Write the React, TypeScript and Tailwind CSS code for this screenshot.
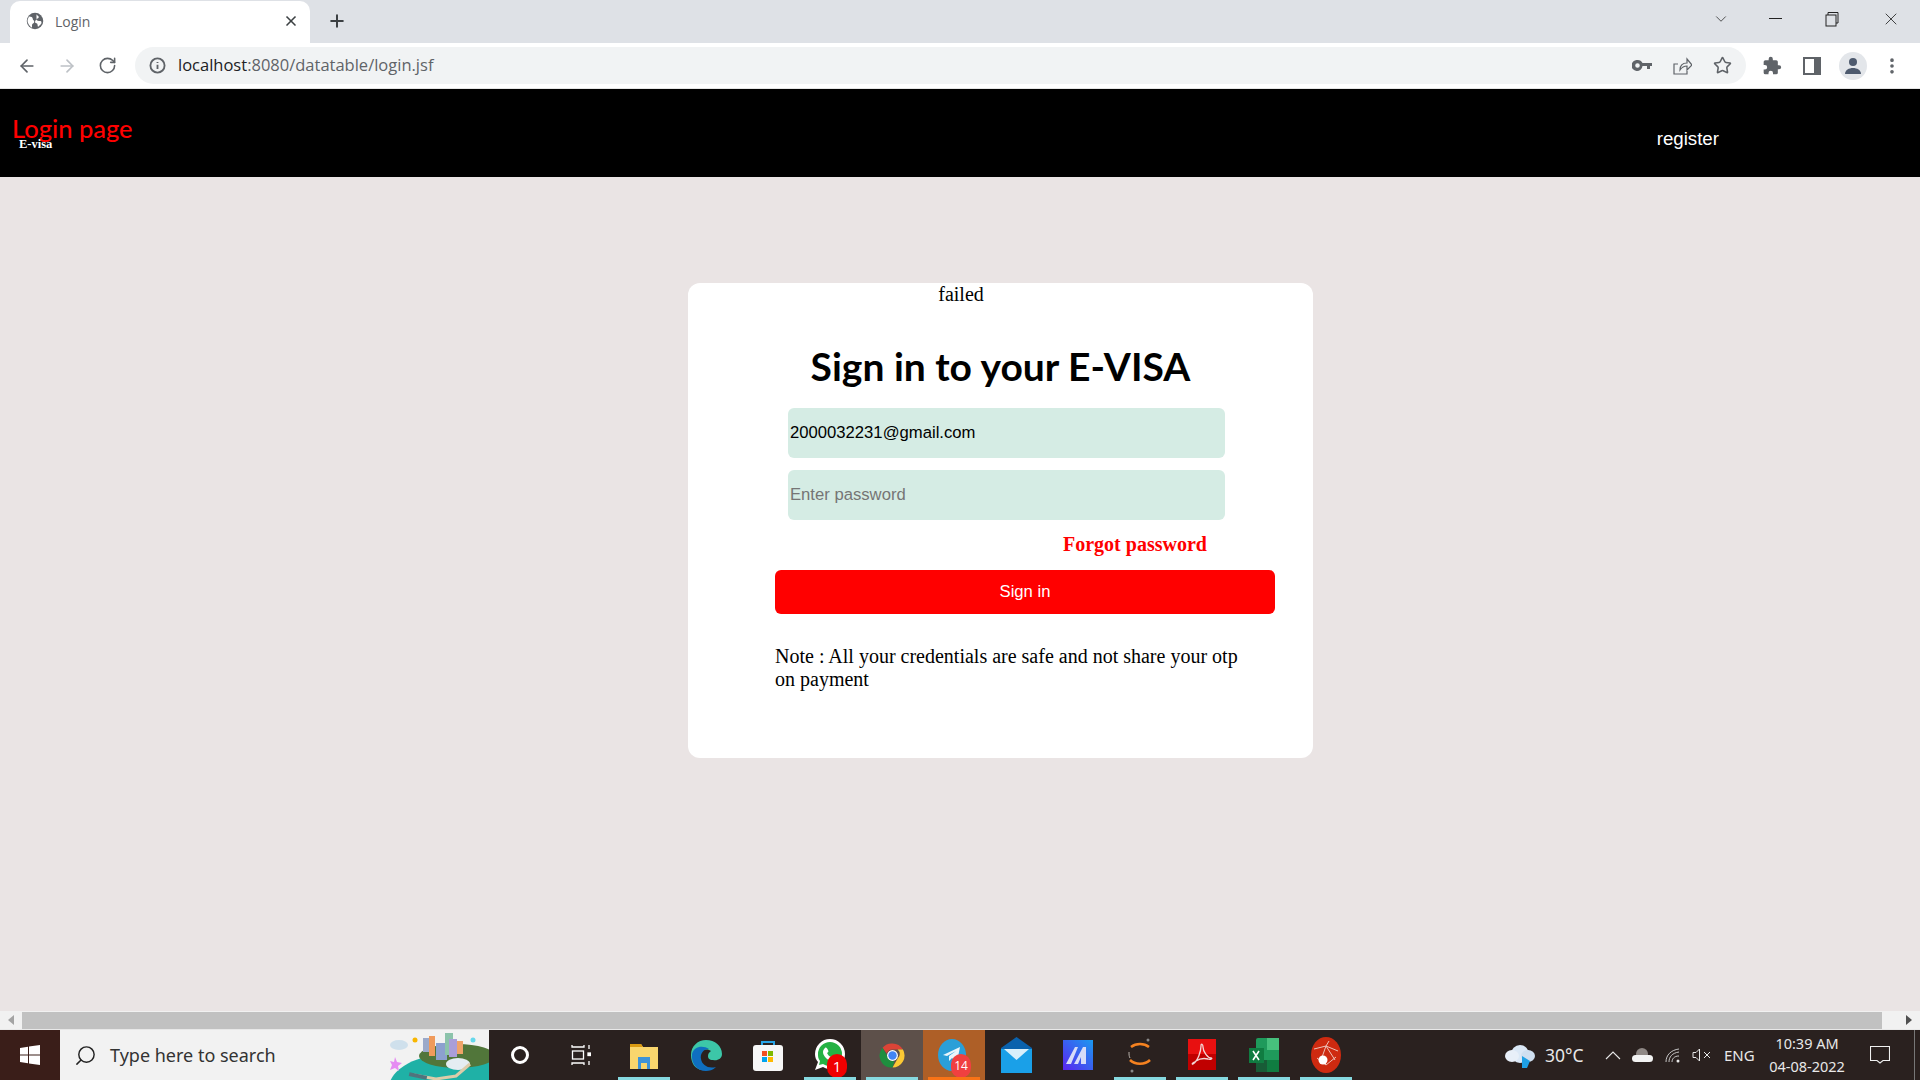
import React from "react";
import { ArrowLeft, ArrowRight, RotateCw, X, Plus, ChevronDown, Star, MoreVertical, Search } from "lucide-react";

const Globe = () => (
  <svg width="18" height="18" viewBox="0 0 24 24"><circle cx="12" cy="12" r="11" fill="#5f6368" /><path d="M4 6c3 0 5 1 5 3s2 2 2 4-2 2-3 4v4C5 19 2 15 2 12c0-2 1-4 2-6zM14 3c1 2 3 2 3 4s-3 1-3 3 3 2 5 2 2 3 1 4-3 3-4 4c-1-3 0-4-2-5-3 0-2-4 0-5" fill="#fff" /></svg>
);

function Chrome() {
  return (
    <div className="shrink-0 font-['Open_Sans',sans-serif]">
      <div className="h-[43px] bg-[#dee1e6] flex items-end pl-[10px]">
        <div className="w-[300px] h-[42px] bg-white rounded-t-[10px] flex items-center pl-[16px] pr-[11px] pb-[2px]">
          <Globe />
          <span className="ml-[11px] text-[14px] text-[#5f6368]">Login</span>
          <X className="ml-auto text-[#3c4043]" size={16} strokeWidth={2.5} />
        </div>
        <Plus className="ml-[17px] mb-[12px] text-[#3c4043]" size={20} strokeWidth={2.4} />
        <div className="ml-auto self-stretch flex items-center text-[#222]">
          <ChevronDown size={18} strokeWidth={1} className="mr-[39px] mb-[6px]" />
          <div className="w-[13px] h-[1px] bg-[#222] mr-[43px] mb-[6px]" />
          <svg width="14" height="16" viewBox="0 0 14 16" className="mr-[42px] mb-[6px]" fill="none" stroke="#222"><rect x="1" y="4" width="10" height="11" /><path d="M3 4V1.5h10V12h-2" /></svg>
          <X size={20} strokeWidth={1} className="mr-[19px] mb-[6px]" />
        </div>
      </div>
      <div className="h-[46px] bg-white border-b border-[#e5e5e5] flex items-center">
        <ArrowLeft size={20} className="ml-[17px] text-[#5f6368]" strokeWidth={2} />
        <ArrowRight size={20} className="ml-[20px] text-[#bdc1c6]" strokeWidth={2} />
        <RotateCw size={19} className="ml-[21px] text-[#5f6368]" strokeWidth={2} />
        <div className="ml-[18px] w-[1611px] h-[37px] bg-[#f1f3f4] rounded-full flex items-center pl-[14px]">
          <svg width="17" height="17" viewBox="0 0 24 24" fill="none" stroke="#5f6368" strokeWidth="2.6"><circle cx="12" cy="12" r="10" /><path d="M12 11v6M12 7v1.5" /></svg>
          <span className="ml-[12px] text-[16.5px] text-[#5f6368] tracking-[0px]"><span className="text-[#202124]">localhost</span>:8080/datatable/login.jsf</span>
          <div className="ml-auto flex items-center pr-[14px]">
            <svg width="20" height="12" viewBox="0 0 20 12" fill="#5f6368"><path d="M5.500 0a5.500 5.500 0 0 1 5 3H20v3h-2v3h-3V6h-4.500a5.500 5.500 0 1 1-5-6zm0 3.200a2.300 2.300 0 1 0 0 4.600 2.300 2.300 0 0 0 0-4.600z" /></svg>
            <svg width="20" height="20" viewBox="0 0 20 20" fill="none" stroke="#5f6368" strokeWidth="1.200" className="ml-[20px]"><path d="M6 8H2v10h13v-3M8 14c0-5 3-7 7-7V3l5 6-5 5v-4c-3 0-5 1-7 4z" /></svg>
            <Star size={19} className="ml-[21px] text-[#5f6368]" strokeWidth={2} />
          </div>
        </div>
        <svg width="20" height="20" viewBox="0 0 24 24" fill="#5f6368" className="ml-[16px]"><path d="M20.500 11H19V7a2 2 0 0 0-2-2h-4V3.500a2.500 2.500 0 0 0-5 0V5H4a2 2 0 0 0-2 2v3.800h1.500a2.700 2.700 0 0 1 0 5.400H2V20a2 2 0 0 0 2 2h3.800v-1.500a2.700 2.700 0 0 1 5.400 0V22H17a2 2 0 0 0 2-2v-4h1.500a2.500 2.500 0 0 0 0-5z" /></svg>
        <svg width="18" height="18" viewBox="0 0 18 18" className="ml-[21px]"><rect width="18" height="18" fill="#5f6368" /><rect x="2" y="2" width="9" height="14" fill="#fff" /></svg>
        <div className="ml-[18px] w-[28px] h-[28px] rounded-full bg-[#e3e6ea] flex items-center justify-center">
          <svg width="18" height="18" viewBox="0 0 18 18" fill="#4d5a6e"><circle cx="9" cy="5" r="4" /><path d="M1 17c0-4 4-6 8-6s8 2 8 6z" /></svg>
        </div>
        <MoreVertical size={20} className="ml-[15px] text-[#5f6368]" strokeWidth={2.4} />
      </div>
    </div>
  );
}

function Nav() {
  return (
    <div className="h-[88px] shrink-0 bg-black flex">
      <div className="pl-[12px] pt-[23px]">
        <div className="text-[25.5px] leading-[32px] font-medium text-[#ff0000] font-['Lato',sans-serif]">Login page</div>
        <div className="ml-[7px] -mt-[7px] text-[12.5px] leading-[14px] font-bold text-white font-['Liberation_Serif',serif]">E-visa</div>
      </div>
      <div className="ml-auto mr-[201px] mt-[38px] h-[24px] text-[18.700px] leading-[24px] text-white font-['Liberation_Sans',sans-serif]">register</div>
    </div>
  );
}

function Card() {
  return (
    <div className="ml-[688px] mt-[106px] w-[625px] h-[475px] bg-white rounded-[12px] text-black font-['Liberation_Serif',serif]">
      <div className="text-[20px] leading-[23px] text-center pr-[79px]">failed</div>
      <h1 className="mt-[37px] text-center text-[39px] leading-[46px] font-bold font-['Lato',sans-serif]">Sign in to your E-VISA</h1>
      <input
        readOnly
        value="2000032231@gmail.com"
        className="block mt-[19px] ml-[100px] w-[437px] h-[50px] rounded-[6px] bg-[#d5ece4] px-[2px] text-[16.670px] text-black font-['Liberation_Sans',sans-serif] outline-none"
      />
      <input
        readOnly
        placeholder="Enter password"
        className="block mt-[12px] ml-[100px] w-[437px] h-[50px] rounded-[6px] bg-[#d5ece4] px-[2px] text-[16.670px] placeholder:text-[#757575] font-['Liberation_Sans',sans-serif] outline-none"
      />
      <div className="mt-[13px] ml-[375px] text-[20px] leading-[23px] font-bold text-[#ff0000]">Forgot password</div>
      <button className="block mt-[14px] ml-[87px] w-[500px] h-[44px] pb-[2px] rounded-[6px] bg-[#ff0000] text-white text-[16.670px] font-['Liberation_Sans',sans-serif]">Sign in</button>
      <p className="mt-[31px] ml-[87px] w-[470px] text-[20px] leading-[23px]">Note : All your credentials are safe and not share your otp on payment</p>
    </div>
  );
}

function ScrollBar() {
  return (
    <div className="h-[18px] shrink-0 bg-[#f1f1f1] flex items-center">
      <div className="w-[22px] flex justify-center"><div className="w-0 h-0 border-y-[5px] border-y-transparent border-r-[6px] border-r-[#a3a3a3]" /></div>
      <div className="w-[1860px] h-[17px] bg-[#c1c1c1]" />
      <div className="ml-auto w-[38px] flex justify-end pr-[8px]"><div className="w-0 h-0 border-y-[5px] border-y-transparent border-l-[6px] border-l-[#505050]" /></div>
    </div>
  );
}

type TBProps = { bar?: string; bg?: string; children: React.ReactNode };
const TB = ({ bar, bg, children }: TBProps) => (
  <div className={"w-[62px] h-full relative flex items-center justify-center " + (bg ?? "")}>
    {children}
    {bar ? <div className={"absolute bottom-0 left-[5px] right-[5px] h-[3px] " + bar} /> : null}
  </div>
);

const Badge = ({ n, cls }: { n: string; cls: string }) => (
  <span className={"absolute rounded-full text-white flex items-center justify-center font-['Open_Sans',sans-serif] " + cls}>{n}</span>
);

function City() {
  return (
    <svg width="110" height="50" viewBox="0 0 110 50" className="ml-auto">
      <ellipse cx="72" cy="58" rx="62" ry="34" fill="#1fb1a6" />
      <ellipse cx="78" cy="26" rx="38" ry="12" fill="#51763a" />
      <rect x="44" y="8" width="7" height="14" fill="#9ba9c9" />
      <rect x="50" y="6" width="6" height="20" fill="#f09b5c" />
      <rect x="57" y="13" width="11" height="17" fill="#8ca0cf" />
      <rect x="66" y="3" width="8" height="22" fill="#8cc3ab" />
      <rect x="70" y="9" width="8" height="18" fill="#aa9ed8" />
      <rect x="78" y="11" width="6" height="13" fill="#efa368" />
      <ellipse cx="79" cy="34" rx="12" ry="6" fill="#e4edf2" />
      <path d="M35 45l22 4 20-3 14-12" stroke="#dccca9" strokeWidth="3" fill="none" />
      <rect x="30" y="44" width="18" height="4" fill="#50737d" transform="rotate(12 39 46)" />
      <ellipse cx="20" cy="15" rx="9" ry="5" fill="#cfe0ec" />
      <circle cx="36" cy="10" r="2.500" fill="#f8b600" />
      <circle cx="94" cy="10" r="2.500" fill="#66d8ec" />
      <path d="M16 27l2 5 5 1-4 3 1 5-4-3-5 2 2-5-2-4 4 1z" fill="#e58cf2" />
    </svg>
  );
}

function Taskbar() {
  return (
    <div className="h-[51px] shrink-0 border-t border-[#e8e8e8] bg-[#2a211f] flex items-center text-white font-['Noto_Sans',sans-serif]">
      <div className="w-[60px] h-full bg-[#3a1e19] flex items-center justify-center">
        <svg width="20" height="20" viewBox="0 0 20 20" fill="#fff"><path d="M0 3l8-1.200V9.500H0zM9 1.600L20 0v9.500H9zM0 10.500h8v7.700L0 17zM9 10.500h11V20L9 18.400z" /></svg>
      </div>
      <div className="w-[429px] h-full bg-[#f2f2f2] flex items-center pl-[14px] overflow-hidden">
        <Search size={23} strokeWidth={1.500} className="text-[#222] -scale-x-100" />
        <span className="ml-[13px] text-[18px] text-[#333]">Type here to search</span>
        <City />
      </div>
      <TB><div className="w-[18px] h-[18px] rounded-full border-[3px] border-white" /></TB>
      <TB>
        <svg width="20" height="22" viewBox="0 0 20 22" fill="none" stroke="#fff" strokeWidth="1.300" className="mr-[3px]"><path d="M1 1v2h12V1M1 21v-2h12v2" /><rect x="1.500" y="7" width="11" height="8" /><path d="M18 1v4M18 17v4" /><rect x="17" y="9" width="2.500" height="2.500" fill="#fff" /></svg>
      </TB>
      <TB bar="bg-[#86d9e0]">
        <svg width="28" height="27" viewBox="0 0 28 27"><path d="M0 2h11l2 3h15v22H0z" fill="#f9d66d" /><path d="M0 2h11l2 3H0z" fill="#d99a12" /><path d="M8 15h12v12h-3v-6h-6v6H8z" fill="#3d93d8" /></svg>
      </TB>
      <TB>
        <svg width="31" height="31" viewBox="0 0 31 31"><path d="M15 0c9 0 16 6 16 14 0 5-5 7-9 6-4 0-5-2-5-4 0-3 2-4 3-5-3-3-11-2-14 5-2 5 0 11 5 14C4 29 0 23 0 15 0 6 7 0 15 0z" fill="#3cc7a8" /><path d="M1 14C3 6 12 5 18 9c-6 0-9 5-8 10 1 6 7 10 15 8-3 3-7 4-10 4C6 31 0 24 1 14z" fill="#0f6fc0" /></svg>
      </TB>
      <TB>
        <svg width="30" height="32" viewBox="0 0 30 32"><path d="M9 8V3h12v5" fill="none" stroke="#28a4e6" strokeWidth="2" /><rect y="6" width="30" height="26" rx="3" fill="#f7f7f7" /><rect x="9" y="12" width="5" height="5" fill="#f25022" /><rect x="15" y="12" width="5" height="5" fill="#7fba00" /><rect x="9" y="18" width="5" height="5" fill="#00a4ef" /><rect x="15" y="18" width="5" height="5" fill="#ffb900" /></svg>
      </TB>
      <TB bar="bg-[#86d9e0]">
        <div className="relative w-[32px] h-[32px]">
          <svg width="32" height="32" viewBox="0 0 32 32"><path d="M16 0a15 15 0 0 1 0 30c-3 0-5-1-7-2l-8 3 3-8C2 21 1 18 1 15A15 15 0 0 1 16 0z" fill="#fff" /><path d="M16 3a12 12 0 0 1 0 24c-3 0-5-1-7-2l-4 1 1-4C4 20 4 17 4 15A12 12 0 0 1 16 3z" fill="#25b244" /><path d="M11 9c1-1 2 0 3 2s0 2-1 3c1 2 2 3 4 4 1-1 2-1 3 0s2 2 1 3-3 1-6 0-6-5-6-8c0-2 1-3 2-4z" fill="#fff" /></svg>
          <Badge n="1" cls="bg-[#f00000] w-[20px] h-[24px] left-[13px] top-[15px] text-[15px]" />
        </div>
      </TB>
      <TB bg="bg-[#5d504a]" bar="bg-[#86d9e0]">
        <svg width="29" height="29" viewBox="0 0 48 48"><path d="M24 4a20 20 0 0 1 17.300 10H24a10 10 0 0 0-9.500 6.500L7.500 11A20 20 0 0 1 24 4z" fill="#db4437" /><path d="M41.300 14A20 20 0 0 1 24 44l8.600-15a10 10 0 0 0 0-15z" fill="#fcc934" /><path d="M24 44A20 20 0 0 1 7.500 11l8.600 15a10 10 0 0 0 11 7.500z" fill="#1e8e3e" /><circle cx="24" cy="24" r="9" fill="#fff" /><circle cx="24" cy="24" r="7" fill="#4285f4" /></svg>
      </TB>
      <TB bg="bg-[#ae5f27]" bar="bg-[#f97316]">
        <div className="relative w-[32px] h-[32px]">
          <svg width="28" height="32" viewBox="0 0 28 32"><ellipse cx="14" cy="16" rx="14" ry="16" fill="#2a9fd8" /><path d="M5 16l17-8-3 15-5-4-3 3v-5l7-5-9 5z" fill="#eaf6fb" /></svg>
          <Badge n="14" cls="bg-[#f04040] w-[20px] h-[24px] left-[13px] top-[15px] text-[12px]" />
        </div>
      </TB>
      <TB>
        <svg width="31" height="36" viewBox="0 0 31 36"><path d="M15.500 0L31 11v25H0V11z" fill="#0a62ad" /><path d="M0 12h31v24H0z" fill="#1aa0e8" /><path d="M3 12h25l-12.500 11z" fill="#d9f0fb" /></svg>
      </TB>
      <TB>
        <svg width="30" height="30" viewBox="0 0 30 30"><defs><linearGradient id="mg" x1="1" y1="0" x2="0" y2="1"><stop offset="0" stopColor="#1a9af0" /><stop offset="1" stopColor="#5a24f0" /></linearGradient></defs><rect width="30" height="30" fill="url(#mg)" /><path d="M3 24L12 7h3L8 24zM11 24L20 7h3v17h-5v-7l-3 7z" fill="#d7dcf8" /></svg>
      </TB>
      <TB bar="bg-[#86d9e0]">
        <svg width="26" height="38" viewBox="0 0 26 38" fill="none"><path d="M4 11c5-4 13-4 18 0" stroke="#f58220" strokeWidth="2.500" /><path d="M3 24c5 5 15 5 20 0" stroke="#f58220" strokeWidth="2.500" /><path d="M2 16c0 3 0 4 1 6" stroke="#b9b2ab" strokeWidth="1" /><circle cx="21" cy="4" r="1.500" fill="#888" /><circle cx="5" cy="35" r="1.500" fill="#888" /></svg>
      </TB>
      <TB bar="bg-[#86d9e0]">
        <svg width="28" height="32" viewBox="0 0 28 32"><rect width="28" height="31" fill="#c00000" /><rect y="0" width="28" height="15" fill="#e81010" /><path d="M5 25c5-3 8-13 8-18 0-3 2-2 2 1 0 5 5 11 8 11 2 0 0 2-3 1-4-1-9 0-12 2s-5 4-3 2z" fill="none" stroke="#f3d6d6" strokeWidth="1.300" /></svg>
      </TB>
      <TB bar="bg-[#86d9e0]">
        <svg width="30" height="34" viewBox="0 0 30 34"><rect x="7" width="23" height="34" rx="2" fill="#1f9a5b" /><rect x="18" width="12" height="12" fill="#47c07d" /><rect x="18" y="22" width="12" height="12" fill="#107c41" /><rect x="7" y="22" width="11" height="12" fill="#185c37" /><rect y="10" width="15" height="15" fill="#107c41" /><path d="M4 13l6 9M10 13l-6 9" stroke="#fff" strokeWidth="1.600" /></svg>
      </TB>
      <TB bar="bg-[#86d9e0]">
        <svg width="30" height="36" viewBox="0 0 30 36"><ellipse cx="15" cy="18" rx="15" ry="18" fill="#ce2a10" /><path d="M3 12l12-3 12 5M15 9l-5 14 5 5 10-8M15 28l-9-7M18 4l-3 5 9 14" stroke="#ecc2b8" strokeWidth="1" fill="none" /><circle cx="12" cy="23" r="4.500" fill="#fff" /></svg>
      </TB>

      <div className="ml-auto h-full flex items-center relative">
        <svg width="30" height="27" viewBox="0 0 30 27" className="mr-[10px]"><ellipse cx="15" cy="12" rx="9" ry="9" fill="#dbe8f6" /><ellipse cx="7" cy="14" rx="7" ry="6" fill="#e8eff8" /><ellipse cx="23" cy="14" rx="7" ry="6" fill="#cfdff0" /><path d="M17 14l8 5-3 7h-5z" fill="#1fa0e4" /></svg>
        <span className="text-[17.500px] text-[#e8e8e8] w-[38px] whitespace-nowrap">30°C</span>
        <svg width="16" height="9" viewBox="0 0 16 9" fill="none" stroke="#e8e8e8" strokeWidth="1.100" className="ml-[22px]"><path d="M1 8l7-7 7 7" /></svg>
        <svg width="21" height="14" viewBox="0 0 21 14" className="ml-[11px]"><ellipse cx="10" cy="6" rx="6" ry="6" fill="#8f8885" /><rect x="0" y="7" width="21" height="7" rx="3.500" fill="#f3f3f3" /></svg>
        <svg width="15" height="15" viewBox="0 0 15 15" fill="none" stroke="#d8d8d8" strokeWidth="0.900" className="ml-[12px]"><path d="M1 14c0-7 5-12 13-13M4 14c0-5 3-9 10-10M7 14c0-3 2-6 7-6" /><circle cx="13" cy="13" r="1.500" fill="#e8e8e8" stroke="none" /></svg>
        <svg width="20" height="14" viewBox="0 0 20 14" fill="none" stroke="#e8e8e8" strokeWidth="1" className="ml-[12px]"><path d="M1 4.500h3L7.500 1v12L4 9.500H1zM12 4l6 6M18 4l-6 6" /></svg>
        <span className="ml-[12px] text-[15px] text-[#e8e8e8] w-[32px]">ENG</span>
        <div className="ml-[12px] w-[78px] text-center text-[14.500px] leading-[23px] text-[#e8e8e8] whitespace-nowrap">
          <div>10:39 AM</div>
          <div>04-08-2022</div>
        </div>
        <svg width="20" height="18" viewBox="0 0 20 18" fill="none" stroke="#f0f0f0" strokeWidth="1.100" className="ml-[24px] mr-[30px]"><path d="M.5.500h19v14h-6.500L10 17l-3-2.500H.5z" /></svg>
        <div className="absolute right-[5px] top-0 bottom-0 w-[1px] bg-[#777]" />
      </div>
    </div>
  );
}

export default function App() {
  return (
    <div className="w-[1920px] h-[1080px] overflow-hidden flex flex-col bg-[#eae4e4]">
      <Chrome />
      <Nav />
      <main className="flex-1 min-h-0">
        <Card />
      </main>
      <ScrollBar />
      <Taskbar />
    </div>
  );
}
